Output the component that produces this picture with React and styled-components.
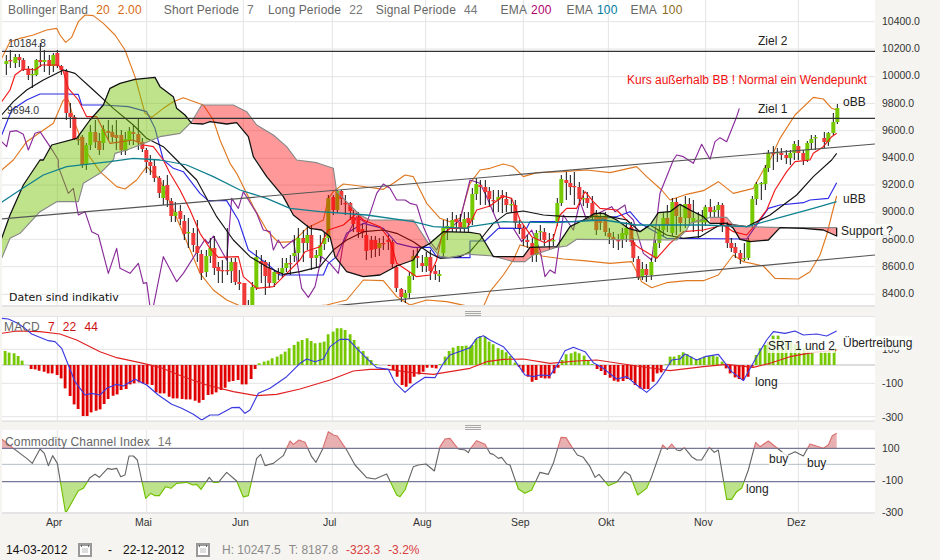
import React from "react";
import styled, { createGlobalStyle } from "styled-components";

const Global = createGlobalStyle`
  html, body { margin: 0; padding: 0; background: #f5f4f0; }
  body { font-family: "Liberation Sans", Arial, sans-serif; }
`;

const S = (dx, dy, s) =>
  s.trim().split(/\s+/).map((p) => {
    const [a, b] = p.split(",").map(Number);
    return `${a + dx},${b + dy}`;
  }).join(" ");
const Z1 = (s) => S(0, 0, s);
const Z2 = (s) => S(1410, 0, s);
const Z3 = (s) => S(0, 480, s);
const Z4 = (s) => S(1410, 480, s);

/* ---------- price series (3x coordinates of the picture) ---------- */
const upper = [
  Z1("5,175 30,125 60,115 100,105 140,90 170,85 180,105 197,127 215,112 235,65 255,45 280,47 310,70 345,105 375,150 405,230 435,340 455,352 490,325 520,305 550,293 610,315 640,360 660,420 690,490"),
  Z3("710,40 760,140 800,210 835,247 880,245 920,205 970,180 985,115 1000,95 1030,72 1080,78 1150,88 1180,70 1215,45 1240,50 1280,130 1320,175 1350,185 1380,175"),
  Z4("0,70 30,30 60,25 100,12 130,20 160,50 200,38 280,35 350,30 420,38 500,20 530,50 575,90 600,120 650,103 700,92 745,65 790,100 850,85 880,30 900,0"),
  Z2("930,415 975,345 1030,292 1060,297 1085,325 1100,330"),
].join(" ");
const lower = [
  Z3("5,30 40,0"),
  Z1("80,425 160,370 190,300 205,300 225,370 255,450"),
  Z3("300,35 350,80 375,87 410,60 440,20 480,60 520,150 600,340 640,390 680,420 730,442 820,442 885,437 900,442 980,435 1040,420 1090,360 1150,362 1190,410 1230,435 1280,420 1340,425 1410,440"),
  Z4("40,440 60,395 100,345 130,300 150,255 190,265 215,288 280,297 340,302 420,310 485,305 515,365 545,383 590,368 650,362 700,362 745,345 790,285 820,305 880,318 915,355 985,357 1020,335 1050,285 1070,225 1085,165 1100,108"),
].join(" ");
const redLine = [
  Z1("5,305 30,270 45,225 65,210 85,207 105,210 125,195 175,195 190,215 205,265 235,300 260,350 290,350 330,430 400,420 430,435 460,440 490,480"),
  Z3("510,40 540,90 570,150 600,220 630,265 655,292 715,290 730,350 770,385 820,380 860,340 900,300 915,275 960,260 985,210 1030,195 1070,160 1090,180 1140,200 1170,240 1190,310 1220,330 1250,350 1290,345 1310,300 1325,230 1350,205 1400,205"),
  Z4("0,190 20,150 60,138 100,108 125,115 150,180 185,230 225,248 250,235 270,165 290,145 320,145 345,95 370,125 390,145 440,150 480,190 490,250 510,265 560,295 600,250 640,215 700,210 760,195 790,215 830,225 860,190 890,150 915,90 950,35 975,5 1020,0"),
  Z2("1030,460 1060,440 1085,410 1100,400"),
].join(" ");
const blackMA = [
  Z1("5,345 40,305 80,270 130,240 190,210 225,220 280,270 340,325 400,375 440,415 490,440 530,480"),
  Z3("590,60 650,170 700,240 750,290 800,320 850,343 900,335 960,320 1000,270 1040,240 1090,215 1150,210 1190,220 1240,245 1290,280 1320,295 1380,290"),
  Z4("0,275 30,240 70,190 110,160 160,153 220,165 290,170 360,170 420,170 470,180 510,215 540,195 590,225 640,235 690,230 740,200 760,190 830,200 900,165 980,105 1030,50 1085,0"),
  Z2("1100,460"),
].join(" ");
const blueLine = [
  Z1("5,405 35,330 80,300 120,282 200,282 235,283 245,315 310,315 385,320 440,335 465,385 490,480"),
  Z3("520,25 550,35 600,100 625,122 680,122 715,180 745,270 800,310 840,345 970,345 985,310 1010,290 1040,220 1090,190 1150,205 1190,250 1240,262 1290,262 1310,290 1340,293 1410,293"),
  Z4("0,243 45,243 85,205 170,205 180,185 320,185 440,170 480,155 510,190 590,235 830,237 895,145 930,135 1000,128 1020,120 1075,115 1100,68"),
].join(" ");
const tealLine = [
  Z3("5,127 60,90 130,45 200,20 330,5 400,-5 480,0 560,15 640,50 720,90 800,115 870,145 960,155 1100,165 1240,185 1300,200 1400,205"),
  Z4("0,200 100,185 250,188 400,180 500,195 700,195 830,200 920,175 1030,145 1100,125"),
].join(" ");
const purpleLine = [
  Z1("5,425 20,440 30,395 50,392 70,403 85,450 105,400 120,395 160,455 175,480"),
  Z3("175,20 205,100 220,85 235,165 255,155 275,215 295,225 325,340 350,265 360,325 390,340 415,310 430,370 440,368 450,440 460,440 490,290 530,365 550,340 615,238 625,250 640,228 680,300 695,115 715,145 730,95 770,160 790,210 810,215 820,270 835,240 850,265 880,240 905,385 925,412 945,380 965,290 990,310 1015,340 1030,250 1070,170 1100,190 1130,100 1150,72 1170,85 1190,120 1215,120 1230,130 1250,135 1270,200 1290,245 1310,270 1330,220 1350,205 1380,180 1410,60"),
  Z4("30,70 50,110 90,205 130,205 155,245 185,210 210,270 225,350 240,330 255,340 280,165 310,210 330,125 350,180 375,165 425,140 435,155 465,135 470,160 490,180 520,280 545,300 570,100 610,0"),
  Z2("620,465 640,470 670,490 695,433 720,478 735,425 750,413 770,425 800,350 808,325"),
].join(" ");

const cloudA = [
  Z3("5,235 30,165 70,75 120,0"),
  Z1("130,480 155,435 230,415 270,360 310,315 330,265 360,250 405,238 465,232 480,260 520,290 530,325 555,345 575,370 610,372 630,365 680,372 710,368 745,410 760,470"),
  Z3("800,50 850,110 880,165 930,205 965,210 990,230 1005,290 1040,335 1090,350 1140,345 1190,318 1240,300 1262,265 1290,250 1330,215 1410,217"),
  Z4("30,222 50,255 70,290 160,290 180,262 260,260 300,200 340,180 375,160 400,160 440,180 475,205 510,215 540,195 565,158 600,155 630,133 660,150 700,170 720,190 770,190 790,205 810,238 840,245 895,240 930,203 1000,205 1060,210 1100,228 1100,203"),
].join(" ");
const cloudB = [
  Z3("5,295 30,235 60,220 120,155 170,125 235,125 250,70 300,40 340,0"),
  Z1("345,460 380,450 420,435 480,410 540,400 575,365 605,315 700,315 740,335 770,375 820,405 860,440 890,480"),
  Z3("950,8 1000,25 1010,95 1045,130 1080,165 1110,180 1240,180 1285,250 1320,290 1350,293 1410,280"),
  Z4("0,283 70,288 130,305 165,305 190,285 260,262 290,258 320,238 620,240 650,210 660,190 720,172 770,172 790,195 830,200 935,203 1100,203"),
].join(" ");
const greenClouds = [
  Z3("5,235 30,165 70,75 120,0") + " " + Z1("130,480 155,435 230,415 270,360 310,315 330,265 360,250 405,238 465,232 480,260 520,290 530,325 555,345 575,370 540,400 480,410 420,435 380,450 345,460") + " " + Z3("340,0 300,40 250,70 235,125 170,125 120,155 60,220 30,235 5,295"),
  Z3("1285,250 1330,215 1410,217") + " " + Z4("30,222 50,255 70,288 0,283") + " " + Z3("1410,280 1350,293 1320,290"),
  Z4("260,260 300,200 340,180 375,160 400,160 440,180 475,205 510,215 540,195 565,158 600,155 630,133 660,150 700,170 720,190 660,190 650,210 620,240 320,238 290,258"),
];
const pinkClouds = [
  Z1("575,370 605,315 700,315 740,335 770,375 820,405 860,440 890,480") + " " + Z3("950,8 1000,25 1010,95 1045,130 1080,165 1110,180 1240,180 1285,250 1262,265 1240,300 1190,318 1140,345 1090,350 1040,335 1005,290 990,230 965,210 930,205 880,165 850,110 800,50 770,0") + " " + Z1("760,470 745,410 710,368 680,372 630,365 610,372"),
  Z4("70,290 160,290 180,262 260,262 190,285 165,305 130,305"),
  Z4("720,172 770,172 790,195 830,200 935,203 1100,203 1100,228 1060,210 1000,205 930,203 895,240 840,245 810,238 790,205 770,190 720,190"),
];

/* [x (3x), open, close, high, low] — y in page pixels */
const candles = [
  [17,64,61,55,75],[30,60,61,50,68],[45,63,57,54,68],[57,57,60,54,67],[70,60,70,58,71],[83,69,75,66,80],[95,75,74,68,88],[108,75,60,59,76],[120,60,62,43,67],[133,62,60,50,72],[146,60,66,55,75],[159,66,55,53,72],[172,53,66,50,68],[184,66,70,65,75],[197,71,113,69,120],[210,113,117,103,128],[222,117,139,115,140],[235,139,140,136,145],[245,137,165,135,168],[258,165,145,143,170],[271,145,132,125,150],[284,132,142,120,148],[297,141,150,133,155],[310,143,129,125,150],[323,131,133,120,140],[336,132,137,125,142],[349,135,138,120,150],[362,135,150,130,155],[375,151,139,132,155],[388,140,131,127,145],[400,132,134,125,145],[413,134,142,118,150],[425,142,149,138,152],[438,150,162,148,173],[450,162,166,155,175],[463,166,178,160,182],[476,178,193,176,198],[489,198,186,180,205],[500,185,200,175,207],[513,201,216,198,222],[526,216,212,202,222],[539,211,219,205,225],[552,221,234,215,240],[565,233,232,218,248],[578,233,245,228,252],[591,246,253,220,262],[604,254,273,250,280],[617,272,256,250,277],[630,256,248,238,263],[641,248,268,236,275],[654,267,271,262,283],[667,270,271,260,283],[680,270,271,228,275],[693,271,262,258,283],[705,262,282,258,285],[718,282,284,270,290],[731,283,307,283,307],[744,305,306,300,307],[757,306,287,282,307],[769,288,257,250,290],[782,261,264,255,283],[795,262,276,260,295],[808,268,283,262,288],[821,283,272,270,287],[834,272,274,268,280],[845,273,268,258,278],[858,268,263,258,272],[870,263,264,255,275],[883,256,253,235,262],[895,253,238,228,262],[908,238,243,230,262],[921,243,235,225,250],[934,235,258,225,270],[947,258,255,250,268],[960,256,245,235,262],[972,244,238,232,250],[985,238,198,195,242],[998,197,210,195,215],[1010,210,191,190,213],[1023,191,199,190,205],[1036,203,204,195,215],[1049,203,211,202,220],[1060,217,224,210,232],[1073,217,232,212,238],[1086,229,233,224,238],[1099,235,251,225,260],[1112,240,250,236,258],[1125,240,249,236,257],[1138,248,243,238,256],[1150,243,244,236,250],[1163,240,242,235,250],[1176,242,264,240,268],[1189,267,288,265,292],[1202,289,297,288,302],[1215,298,293,290,303],[1228,293,276,272,298],[1240,276,256,250,280],[1252,256,258,248,268],[1265,263,266,255,272],[1278,266,257,252,272],[1291,257,271,250,280],[1304,271,274,265,280],[1317,276,274,270,282],[1330,253,228,220,258],[1342,229,226,218,240],[1355,228,220,212,232],[1368,219,222,215,232],[1380,222,228,214,232],[1392,228,219,212,232],[1403,218,223,212,232],
  [1415,220,194,188,225],[1428,194,184,178,200],[1441,185,187,180,205],[1454,187,192,180,205],[1467,191,199,187,207],[1480,200,201,190,212],[1493,200,197,190,212],[1506,195,198,190,213],[1519,199,205,192,212],[1532,205,204,198,212],[1544,205,223,200,228],[1557,224,228,220,234],[1570,228,239,225,246],[1582,240,242,235,248],[1595,243,255,238,262],[1608,255,233,230,262],[1621,232,231,225,240],[1633,232,240,228,246],[1646,240,241,233,250],[1659,241,240,234,246],[1672,222,203,198,226],[1684,203,179,175,206],[1697,180,183,172,200],[1710,183,187,175,195],[1723,186,187,172,205],[1736,187,199,182,205],[1749,199,198,190,206],[1762,198,203,192,208],[1775,203,215,196,220],[1788,215,230,210,235],[1801,217,223,212,230],[1814,217,232,212,236],[1827,233,237,228,244],[1840,237,240,232,248],[1853,240,241,234,250],[1866,240,233,228,248],[1879,235,228,222,242],[1892,227,242,222,246],[1900,242,258,238,262],[1913,259,277,256,280],[1926,277,269,262,280],[1939,269,275,264,282],[1952,275,262,258,280],[1965,258,243,240,262],[1978,243,230,225,248],[1990,230,218,212,236],[2002,218,225,205,232],[2015,233,202,198,236],[2028,202,216,198,235],[2041,217,223,205,232],[2054,218,204,196,228],[2067,204,218,198,226],[2080,222,218,200,232],[2093,220,221,212,238],[2105,222,219,210,232],[2116,222,207,205,226],[2129,207,212,199,218],[2141,212,210,206,218],[2154,210,205,202,218],[2167,205,225,203,232],[2180,225,243,222,248],[2193,243,248,238,252],[2206,247,253,243,258],[2219,253,259,250,264],[2232,259,258,243,261],[2243,258,240,238,260],[2256,225,199,196,228],[2269,199,184,182,205],[2282,184,183,182,200],[2295,184,168,165,190],[2305,168,153,150,172],
  [2320,153,154,146,170],[2331,153,152,148,162],[2344,153,155,148,160],[2357,155,158,150,164],[2370,158,153,150,165],[2382,153,144,141,160],[2395,146,153,140,160],[2408,153,160,150,165],[2420,160,143,141,162],[2433,143,139,135,150],[2446,138,137,135,150],[2472,138,142,132,148],[2485,142,133,132,146],[2498,133,122,113,135],[2510,122,108,104,124],
];

const bars1 = [42,37,35,27,13,0,-12,-13,-17,-20,-25,-25,-30,-40,-70,-93,-118,-132,-153,-153,-142,-137,-133,-117,-102,-92,-88,-75,-72,-58,-55,-52,-55,-58,-60,-82,-85,-85,-95,-100,-100,-102,-103,-103,-107,-113,-105,-90,-88,-82,-75,-68,-50,-48,-45,-58,-58,-42,-12,5,10,13,20,25,32,40,50,60,70,75,80,72,65,67,70,92,100,110,110,105,92,75,55,42,25,15,3,0,0,-3,-15,-35,-60,-65,-55,-35,-28,-20,-8,-8,-10,3,25,42,52,57,57,58,55];
const bars2 = [60,78,87,85,70,62,50,45,38,27,7,-5,-22,-35,-50,-45,-38,-40,-40,-25,-8,15,32,35,40,35,28,15,3,-12,-18,-30,-38,-47,-50,-48,-42,-45,-60,-70,-72,-72,-50,-25,-22,2,25,25,30,38,33,25,18,20,25,27,28,25,10,-10,-25,-37,-42,-45,-35,-5,30,50,60,68,88,88,75,68,70,62,55,50,42,38,0,40,42,42,50];

const macdBlue = S(0,0,"5,25 25,27 50,38 75,55 95,72 145,92 165,95 185,115 205,165 225,215 255,255 275,250 300,255 320,235 350,223 370,228 405,208 440,225 475,255 515,283 545,295 580,313 605,330 630,315 655,315 695,293 718,292 735,310 750,300 775,250 810,235 860,200 900,160 920,147 945,155 970,147 990,110 1020,88 1045,88 1070,115 1100,145 1130,173 1165,178 1185,218 1215,247 1240,225 1275,202 1305,203 1330,160 1350,135 1410,113") + " " + S(1410,0,"20,85 40,77 60,90 100,110 130,145 165,195 190,200 210,195 240,197 265,160 285,122 310,112 345,125 370,158 400,175 440,207 470,200 500,225 530,247 560,220 585,183 605,150 630,147 645,132 680,150 705,140 745,133 785,185 820,212 860,140 890,90 910,65 945,70 975,63 1000,75 1040,72 1070,78 1100,63");
const macdRed = S(0,0,"5,70 50,63 120,65 180,72 230,90 300,125 350,143 420,158 480,172 550,200 620,225 700,245 770,257 830,253 900,237 990,210 1060,183 1110,178 1165,178 1230,187 1300,193 1410,175") + " " + S(1410,0,"50,155 100,148 160,147 240,160 320,153 380,150 500,168 600,182 700,170 770,163 850,172 900,160 960,140 1030,127 1100,120");

const cci = S(0,0,"5,42 40,70 80,100 97,115 120,72 133,85 145,122 158,92 172,115 197,265 235,197 250,190 270,158 285,148 298,157 323,130 335,133 350,130 362,155 375,150 387,93 400,93 412,105 437,220 452,205 465,212 478,212 497,185 513,190 530,175 560,172 578,180 590,178 603,193 628,157 640,172 655,172 680,142 710,168 730,216 745,212 770,100 782,88 795,122 820,115 835,103 850,92 870,48 880,58 897,45 915,52 935,95 948,112 968,72 985,20 1000,30 1012,33 1040,75 1065,120 1100,158 1125,162 1160,147 1190,210 1200,215 1215,195 1240,125 1255,120 1278,117 1303,138 1320,65 1335,42 1350,40 1375,72 1395,75 1405,83") + " " + S(1410,0,"0,72 20,47 45,58 60,85 70,88 85,100 95,97 110,117 120,120 145,192 165,205 185,195 210,142 235,148 250,115 273,37 288,38 305,65 322,90 340,97 360,125 375,157 387,148 415,182 440,172 465,140 480,150 503,210 530,190 545,155 578,60 592,73 605,57 620,75 630,77 643,68 665,95 680,105 695,105 718,67 733,82 745,75 770,223 785,223 800,200 815,190 835,135 857,52 870,65 895,48 925,72 950,92 975,80 1000,93 1020,57 1060,70 1075,60 1087,32 1100,25");

const monthX = [172, 440, 730, 997, 1277, 1570, 1825, 2117, 2395];
const priceY = [65, 147, 230, 310, 392, 475, 555, 637, 718, 800, 883];
const W3 = 2619;

/* ---------- styled parts ---------- */
const Page = styled.div`
  width: 940px;
  height: 560px;
  overflow: hidden;
  background: #f5f4f0;
  display: flex;
  flex-direction: column;
`;
const Row = styled.div`
  display: flex;
  height: ${(p) => p.$h}px;
  flex: none;
`;
const Panel = styled.div`
  position: relative;
  z-index: 1;
  width: 873px;
  margin-left: 2px;
  height: 100%;
  background: #fff;
`;
const Chart = styled.svg`
  display: block;
  width: 873px;
  height: 100%;
  overflow: hidden;
`;
const Axis = styled.div`
  padding: ${(p) => p.$top}px 0 0 7px;
  font-size: 10.5px;
  color: #333;
`;
const Tick = styled.div`
  height: ${(p) => p.$step}px;
  line-height: ${(p) => p.$step}px;
`;
const Splitter = styled.div`
  height: ${(p) => p.$h}px;
  flex: none;
  display: flex;
  align-items: flex-end;
  padding-left: 465px;
`;
const Grip = styled.div`
  width: 16px;
  height: 5px;
  background: repeating-linear-gradient(#a8a8a8 0 1px, transparent 1px 2px);
`;
const Legend = styled.div`
  position: absolute;
  top: ${(p) => p.$top}px;
  left: ${(p) => p.$left}px;
  display: flex;
  font-size: 12px;
  line-height: 16px;
  letter-spacing: 0.15px;
  color: #666;
  white-space: nowrap;
`;
const Key = styled.span`
  margin-left: ${(p) => p.$gap || 0}px;
`;
const Val = styled.span`
  margin-left: ${(p) => p.$gap || 8}px;
  color: ${(p) => p.$c || "#777"};
`;
const Note = styled.span`
  position: absolute;
  left: ${(p) => p.$x}px;
  top: ${(p) => p.$y}px;
  font-size: ${(p) => p.$size || 12}px;
  line-height: 14px;
  white-space: nowrap;
  color: ${(p) => p.$c || "#222"};
  background: ${(p) => (p.$halo ? "rgba(255,255,255,.8)" : "transparent")};
`;
const Indicative = styled(Note)`
  font-family: "DejaVu Sans", sans-serif;
  font-size: 11px;
  color: #111;
`;
const Months = styled.div`
  display: flex;
  height: 14px;
  flex: none;
  padding-left: 46px;
  margin-top: 1px;
  font-size: 10.5px;
  line-height: 14px;
  color: #333;
`;
const Month = styled.span`
  width: ${(p) => p.$w}px;
  flex: none;
`;
const Footer = styled.div`
  display: flex;
  align-items: center;
  height: 14px;
  margin-top: 14px;
  padding-left: 6px;
  font-size: 12px;
  color: #111;
  white-space: nowrap;
`;
const DateText = styled.span`
  width: ${(p) => p.$w}px;
  flex: none;
`;
const CalBtn = styled.svg`
  width: 14px;
  height: 14px;
  flex: none;
  margin-right: ${(p) => p.$mr}px;
`;
const Stat = styled.span`
  margin-right: ${(p) => p.$mr}px;
  color: ${(p) => (p.$bad ? "#d94040" : "#8a8a8a")};
`;

const Cal = ({ mr }) => (
  <CalBtn viewBox="0 0 14 14" $mr={mr}>
    <rect width="14" height="14" fill="#999" />
    <rect x="2" y="3" width="10" height="9" fill="#fff" />
    <rect x="3" y="2" width="1" height="2" fill="#666" />
    <rect x="10" y="2" width="1" height="2" fill="#666" />
    <rect x="4" y="5" width="6" height="5" fill="#ddd" />
  </CalBtn>
);

const Grid = ({ ys, h }) => (
  <g stroke="#e4e4e4" strokeWidth="3">
    {monthX.map((x) => <line key={x} x1={x} x2={x} y1={0} y2={h} />)}
    {ys.map((y) => <line key={y} x1={0} x2={W3 + 6} y1={y} y2={y} />)}
  </g>
);

const Line = ({ pts, c, w = 3.4 }) => (
  <polyline points={pts} fill="none" stroke={c} strokeWidth={w} strokeLinejoin="round" />
);

const MainChart = () => (
  <Chart viewBox="6 0 2619 921" preserveAspectRatio="none">
    <Grid ys={priceY} h={921} />
    <Line pts={upper} c="#e07820" />
    <Line pts={lower} c="#e07820" />
    <Line pts={purpleLine} c="#8a2a9a" />
    <Line pts={blueLine} c="#2a2ae8" />
    {candles.map(([x, o, c, h, l]) => {
      const px = Math.round(x / 3) * 3;
      const top = Math.min(o, c) * 3;
      const ht = Math.max(Math.abs(c - o) * 3, 4);
      return (
        <g key={x}>
          <line x1={px + 1} x2={px + 1} y1={h * 3} y2={l * 3} stroke="#111" strokeWidth="3" />
          <rect x={px - 5} y={top} width="12" height={ht} fill={c < o ? "#76c800" : "#f03a3a"} />
        </g>
      );
    })}
    <Line pts={redLine} c="#f01818" />
    <Line pts={blackMA} c="#111" />
    {greenClouds.map((p, i) => <polygon key={i} points={p} fill="rgba(114,194,0,.46)" />)}
    {pinkClouds.map((p, i) => <polygon key={i} points={p} fill="rgba(255,0,0,.4)" />)}
    <Line pts={cloudB} c="#888" />
    <Line pts={cloudA} c="#111" w={3.8} />
    <Line pts={tealLine} c="#0f8090" w={3.8} />
    <g stroke="#333" strokeWidth="3.5">
      <line x1="0" x2={W3 + 6} y1="154" y2="154" />
      <line x1="0" x2={W3 + 6} y1="355" y2="355" />
    </g>
    <g stroke="#555" strokeWidth="3.5">
      <line x1="0" x2={W3 + 6} y1="657" y2="432" />
      <line x1="975" x2={W3 + 6} y1="920" y2="765" />
    </g>
    <rect x="0" y="915" width={W3 + 6} height="6" fill="#e4e4e4" />
  </Chart>
);

const MacdChart = () => {
  const draw = (vals, start) =>
    vals.map((v, i) => {
      const x = Math.round((start + 12.93 * i) / 3) * 3;
      const y = v >= 0 ? 165 - v : 165;
      const c = v >= 0 ? "#76c800" : "#e00000";
      return (
        <g key={`${start}-${i}`}>
          <rect x={x - 6} y={y} width="12" height={Math.abs(v)} fill={c} opacity=".3" />
          <rect x={x - 3} y={y} width="7" height={Math.abs(v)} fill={c} />
        </g>
      );
    });
  return (
    <Chart viewBox="6 18 2619 318" preserveAspectRatio="none">
      <rect x="0" y="18" width={W3 + 6} height="3" fill="#e4e4e4" />
      <Grid ys={[118, 220, 320]} h={336} />
      <line x1="0" x2={W3 + 6} y1="165" y2="165" stroke="#bbb" strokeWidth="3" />
      {draw(bars1, 15)}
      {draw(bars2, 1415)}
      <Line pts={macdRed} c="#e02020" />
      <Line pts={macdBlue} c="#3a3ae0" />
      <rect x="0" y="331" width={W3 + 6} height="6" fill="#e4e4e4" />
    </Chart>
  );
};

const CciChart = () => {
  const area = `5,120 ${cci} 2510,120`;
  return (
    <Chart viewBox="6 15 2619 252" preserveAspectRatio="none">
      <defs>
        <clipPath id="cci-hi"><rect x="0" y="0" width="2700" height="70" /></clipPath>
        <clipPath id="cci-mid"><rect x="0" y="70" width="2700" height="100" /></clipPath>
        <clipPath id="cci-lo"><rect x="0" y="170" width="2700" height="120" /></clipPath>
      </defs>
      <Grid ys={[]} h={267} />
      <polygon points={area} fill="#e8b0b0" clipPath="url(#cci-hi)" />
      <polygon points={area} fill="#bde38a" clipPath="url(#cci-lo)" />
      <line x1="0" x2={W3 + 6} y1="70" y2="70" stroke="#77779a" strokeWidth="3.5" />
      <line x1="0" x2={W3 + 6} y1="118" y2="118" stroke="#b4bec8" strokeWidth="3" />
      <line x1="0" x2={W3 + 6} y1="170" y2="170" stroke="#77779a" strokeWidth="3.5" />
      <g clipPath="url(#cci-hi)"><Line pts={cci} c="#d87070" /></g>
      <g clipPath="url(#cci-mid)"><Line pts={cci} c="#666" /></g>
      <g clipPath="url(#cci-lo)"><Line pts={cci} c="#70c000" /></g>
      <rect x="0" y="261" width={W3 + 6} height="6" fill="#e4e4e4" />
    </Chart>
  );
};

const months = [["Apr", 89], ["Mai", 97], ["Jun", 91], ["Jul", 90], ["Aug", 98], ["Sep", 87], ["Okt", 96], ["Nov", 93], ["Dez", 40]];
const prices = ["10400.0", "10200.0", "10000.0", "9800.0", "9600.0", "9400.0", "9200.0", "9000.0", "8800.0", "8600.0", "8400.0"];

export default function App() {
  return (
    <Page>
      <Global />
      <Row $h={307}>
        <Panel>
          <MainChart />
          <Legend $left={6} $top={2}>
            <Key>Bollinger Band</Key>
            <Val $c="#d86a10">20</Val>
            <Val $c="#d86a10">2.00</Val>
            <Key $gap={22}>Short Periode</Key>
            <Val>7</Val>
            <Key $gap={14}>Long Periode</Key>
            <Val>22</Val>
            <Key $gap={13}>Signal Periode</Key>
            <Val>44</Val>
            <Key $gap={23}>EMA</Key>
            <Val $c="#b00070" $gap={4}>200</Val>
            <Key $gap={15}>EMA</Key>
            <Val $c="#007a9a" $gap={4}>100</Val>
            <Key $gap={13}>EMA</Key>
            <Val $c="#8a6a20" $gap={5}>100</Val>
          </Legend>
          <Note $x={6} $y={36} $size={10.5} $c="#333">10184.8</Note>
          <Note $x={5} $y={103} $size={10.5} $c="#333">9694.0</Note>
          <Note $x={756} $y={34}>Ziel 2</Note>
          <Note $x={756} $y={102}>Ziel 1</Note>
          <Note $x={625} $y={73} $c="#f01010">Kurs außerhalb BB ! Normal ein Wendepunkt</Note>
          <Note $x={841} $y={95}>oBB</Note>
          <Note $x={841} $y={192}>uBB</Note>
          <Note $x={839} $y={224} $halo>Support ?</Note>
          <Indicative $x={7} $y={291}>Daten sind indikativ</Indicative>
        </Panel>
        <Axis $top={8}>
          {prices.map((p) => <Tick key={p} $step={27.2}>{p}</Tick>)}
        </Axis>
      </Row>
      <Splitter $h={9}><Grip /></Splitter>
      <Row $h={106}>
        <Panel>
          <MacdChart />
          <Legend $left={2} $top={3}>
            <Key>MACD</Key>
            <Val $c="#cc1010">7</Val>
            <Val $c="#cc1010">22</Val>
            <Val $c="#cc1010">44</Val>
          </Legend>
          <Note $x={766} $y={23} $halo>SRT 1 und 2</Note>
          <Note $x={841} $y={20} $halo>Übertreibung</Note>
          <Note $x={753} $y={59}>long</Note>
        </Panel>
        <Axis $top={16}>
          {["100", "-100", "-300"].map((p) => <Tick key={p} $step={34}>{p}</Tick>)}
        </Axis>
      </Row>
      <Splitter $h={8}><Grip /></Splitter>
      <Row $h={84}>
        <Panel>
          <CciChart />
          <Legend $left={3} $top={4}>
            <Key>Commodity Channel Index</Key>
            <Val>14</Val>
          </Legend>
          <Note $x={767} $y={22} $halo>buy</Note>
          <Note $x={805} $y={26} $halo>buy</Note>
          <Note $x={744} $y={52}>long</Note>
        </Panel>
        <Axis $top={2}>
          {["100", "-100", "-300"].map((p) => <Tick key={p} $step={32}>{p}</Tick>)}
        </Axis>
      </Row>
      <Months>
        {months.map(([m, w]) => <Month key={m} $w={w}>{m}</Month>)}
      </Months>
      <Footer>
        <DateText $w={72}>14-03-2012</DateText>
        <Cal mr={16} />
        <DateText $w={15}>-</DateText>
        <DateText $w={73}>22-12-2012</DateText>
        <Cal mr={12} />
        <Stat $mr={8}>H: 10247.5</Stat>
        <Stat $mr={8}>T: 8187.8</Stat>
        <Stat $mr={8} $bad>-323.3</Stat>
        <Stat $mr={0} $bad>-3.2%</Stat>
      </Footer>
    </Page>
  );
}
